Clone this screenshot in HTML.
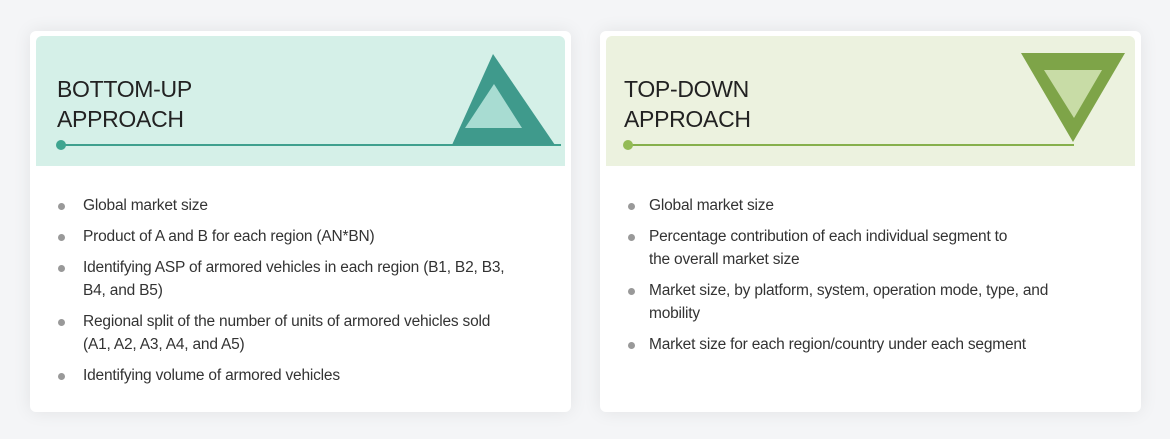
<!DOCTYPE html>
<html><head><style>
body{margin:0;width:1170px;height:439px;background:#f4f5f7;font-family:"Liberation Sans",sans-serif;position:relative;overflow:hidden}
.card{position:absolute;top:31px;width:541px;height:381px;background:#fff;border-radius:6px;box-shadow:0 0 18px rgba(0,0,0,0.08)}
.hd{position:absolute;left:6px;top:5px;width:529px;height:130px;border-radius:6px 6px 0 0}
.t{position:absolute;left:21px;top:38px;font-size:23px;line-height:30px;color:#222;letter-spacing:-0.3px}
.ln{position:absolute;left:25px;top:108px;height:2px}
.dot{position:absolute;left:20px;top:104px;width:10px;height:10px;border-radius:50%}
ul{position:absolute;left:0;top:163px;margin:0;padding:0;list-style:none;font-size:15.5px;color:#333;line-height:23px}
li{position:relative;padding-left:53px;margin-bottom:8px;letter-spacing:-0.2px}
li:before{content:"";position:absolute;left:28px;top:9px;width:7px;height:7px;border-radius:50%;background:#999}
svg{position:absolute}
</style></head><body>
<div class="card" style="left:30px">
 <div class="hd" style="background:#d5f0e8">
  <div class="t">BOTTOM-UP<br>APPROACH</div>
  <div class="ln" style="width:500px;background:#3fa08e"></div>
  <div class="dot" style="background:#3fa590"></div>
  <svg width="529" height="130" style="left:0;top:0"><polygon points="457,18 416,109 519,109" fill="#3f9a8c"/><polygon points="458,48 429,92 486,92" fill="#a8dcd2"/></svg>
 </div>
 <ul><li>Global market size</li><li>Product of A and B for each region (AN*BN)</li><li>Identifying ASP of armored vehicles in each region (B1, B2, B3,<br>B4, and B5)</li><li>Regional split of the number of units of armored vehicles sold<br>(A1, A2, A3, A4, and A5)</li><li>Identifying volume of armored vehicles</li></ul>
</div>
<div class="card" style="left:600px">
 <div class="hd" style="background:#ecf2df">
  <div class="t" style="left:18px">TOP-DOWN<br>APPROACH</div>
  <div class="ln" style="left:22px;width:446px;background:#86b04c"></div>
  <div class="dot" style="left:17px;background:#93bb55"></div>
  <svg width="529" height="130" style="left:0;top:0"><polygon points="415,17 519,17 467,106" fill="#7ea448"/><polygon points="438,34 496,34 468,82" fill="#c8dca6"/></svg>
 </div>
 <ul><li style="padding-left:49px">Global market size</li><li style="padding-left:49px">Percentage contribution of each individual segment to<br>the overall market size</li><li style="padding-left:49px">Market size, by platform, system, operation mode, type, and<br>mobility</li><li style="padding-left:49px">Market size for each region/country under each segment</li></ul>
</div>
</body></html>
